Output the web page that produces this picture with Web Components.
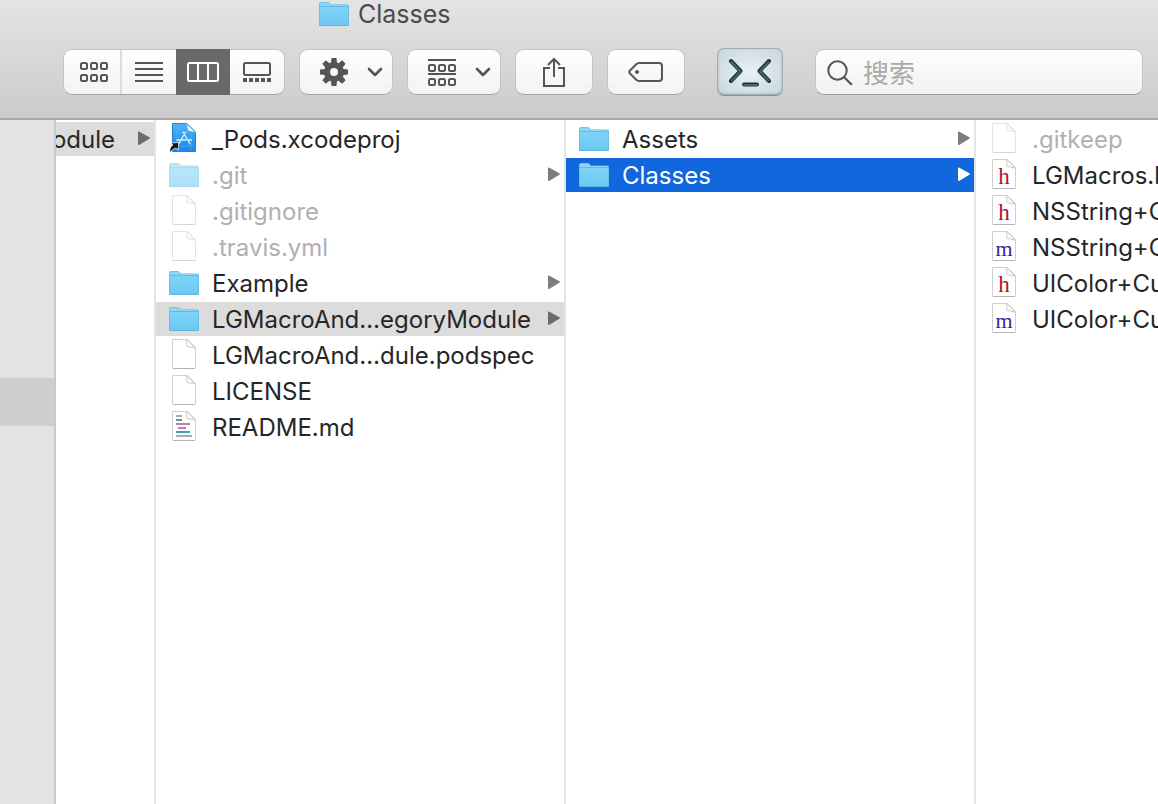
<!DOCTYPE html>
<html lang="zh-CN">
<head>
<meta charset="utf-8">
<meta name="viewport" content="width=device-width, initial-scale=1">
<title>Classes</title>
<style>
html, body { margin: 0; height: 100%; }
body { font-family: Inter, "Noto Sans CJK SC", sans-serif; font-size: 24px; line-height: 32px; color: #262626; background: #fff; overflow: hidden; }
</style>
</head>
<body>
<finder-window>
  <finder-toolbar slot="toolbar" heading="Classes"></finder-toolbar>
  <finder-sidebar slot="sidebar"></finder-sidebar>
  <finder-column class="clipped">
    <finder-row state="open" folder label="odule"></finder-row>
  </finder-column>
  <finder-column>
    <finder-row icon="xcode" label="_Pods.xcodeproj"></finder-row>
    <finder-row icon="folder" label=".git" folder dim></finder-row>
    <finder-row icon="doc" label=".gitignore" dim></finder-row>
    <finder-row icon="doc" label=".travis.yml" dim></finder-row>
    <finder-row icon="folder" label="Example" folder></finder-row>
    <finder-row icon="folder" label="LGMacroAnd…egoryModule" folder state="open"></finder-row>
    <finder-row icon="doc" label="LGMacroAnd…dule.podspec"></finder-row>
    <finder-row icon="doc" label="LICENSE"></finder-row>
    <finder-row icon="markdown" label="README.md"></finder-row>
  </finder-column>
  <finder-column>
    <finder-row icon="folder" label="Assets" folder></finder-row>
    <finder-row icon="folder" label="Classes" folder state="selected"></finder-row>
  </finder-column>
  <finder-column class="last">
    <finder-row icon="doc" label=".gitkeep" dim></finder-row>
    <finder-row icon="header" label="LGMacros.h"></finder-row>
    <finder-row icon="header" label="NSString+C"></finder-row>
    <finder-row icon="method" label="NSString+C"></finder-row>
    <finder-row icon="header" label="UIColor+Cu"></finder-row>
    <finder-row icon="method" label="UIColor+Cu"></finder-row>
  </finder-column>
</finder-window>

<script>
const sheet = '<path d="M4.500 1.500H19.500L27.500 9.500V29.500Q27.500 30.500 26.500 30.500H5.500Q4.500 30.500 4.500 29.500Z" fill="#fff" stroke="#cfcfcf"/><path d="M5 30.500H27" stroke="#b4b4b4"/><path d="M18.500 1.500L19 8.500L27 10L20 2.500Z" fill="#fbfbfb" stroke="#c6c6c6" stroke-width=".9"/>';
const letter = (ch, color) => `<text x="16" y="26" text-anchor="middle" font-family="Liberation Serif, serif" font-size="${ch === 'm' ? 22 : 23}" fill="${color}">${ch}</text>`;
const fileIcons = {
  folder: `<defs><linearGradient id="g" x2="0" y2="1"><stop stop-color="#7fd3f7"/><stop offset="1" stop-color="#6cc8f3"/></linearGradient></defs>
    <path d="M1 28V7Q1 5 3 5H9.500Q10.500 5 11.500 6L13 7.500H29Q31 7.500 31 9.500V28Q31 29 30 29H2Q1 29 1 28Z" fill="#5eb5e0"/>
    <path d="M1.500 9V7Q1.500 5.500 3 5.500H9.500Q10.500 5.500 11.500 6.500L13 8H29Q30.500 8 30.500 9Z" fill="#8bd5f5"/>
    <path d="M1.500 10H30.500V27Q30.500 28 29.500 28H2.500Q1.500 28 1.500 27Z" fill="url(#g)"/><path d="M2 9.500H30" stroke="#62bce8" stroke-width=".8"/>`,
  doc: sheet,
  markdown: sheet + '<g stroke-width="1.800"><path d="M8 6H14M8 26H24" stroke="#a9adb3"/><path d="M8 10H14M8 22H22" stroke="#45a0a0"/><path d="M8 14H22" stroke="#d06a94"/><path d="M10 18H18" stroke="#9a74e0"/></g>',
  header: sheet + letter('h', '#ab1436'),
  method: sheet + letter('m', '#3d2490'),
  xcode: `<defs><linearGradient id="x" x2="0" y2="1"><stop stop-color="#4bb4f2"/><stop offset="1" stop-color="#1b86e8"/></linearGradient></defs>
    <path d="M4.500 1.500H19L27.500 10V29.500H4.500Z" fill="url(#x)" stroke="#2385c9"/><path d="M18.500 1.500L19.500 9L27.500 10.500Z" fill="#e9f5fd" stroke="#59b1e8"/>
    <path d="M6 6H18M6 24H26M9 2V29M23 11V29" stroke="#60baf3" stroke-width=".5"/>
    <g fill="none" stroke="#d9f0ff" stroke-width="1.300" stroke-linecap="round"><path d="M15 10L22 22M17.500 10L11 21.500M9 18H18M20.500 18H23.500M9.500 22L10.500 21"/></g>
    <path d="M2 31Q1 25 5 23L3 21L10.500 20.500V28L8 26Q4 27 2 31Z" fill="#151515" stroke="#fff" stroke-width=".7"/>`
};
const svg = (w, h, body) => `<svg width="${w}" height="${h}" viewBox="0 0 ${w} ${h}" aria-hidden="true">${body}</svg>`;
const cells = (x, y) => [0, 10, 20].map(d => `<rect x="${x + d}" y="${y}" width="6" height="6" rx="1.500"/>`).join('');
const toolIcons = {
  grid: svg(30, 24, `<g fill="none" stroke="#555" stroke-width="2">${cells(2, 3)}${cells(2, 15)}</g>`),
  list: svg(28, 24, '<path d="M0 3H28M0 9H28M0 15H28M0 21H28" stroke="#555" stroke-width="2"/>'),
  columns: svg(32, 24, '<rect x="1" y="3" width="30" height="18" rx="1.500" fill="none" stroke="#fff" stroke-width="2"/><path d="M11 3V21M21 3V21" stroke="#fff" stroke-width="2"/>'),
  gallery: svg(28, 24, '<rect x="1" y="3" width="26" height="12" rx="1.500" fill="none" stroke="#555" stroke-width="2"/><path d="M0 20H4M6 20H10M12 20H16M18 20H22M24 20H28" stroke="#555" stroke-width="4"/>'),
  gear: svg(28, 28, `<g fill="#555">${[0, 45, 90, 135].map(a => `<path d="M11.500 0H16.500L17 5H11ZM11.500 28H16.500L17 23H11Z" transform="rotate(${a} 14 14)"/>`).join('')}</g><circle cx="14" cy="14" r="7" fill="none" stroke="#555" stroke-width="6"/>`),
  group: svg(28, 28, `<g fill="none" stroke="#555" stroke-width="2"><path d="M0 2H28M0 16H28"/>${cells(1, 7)}${cells(1, 21)}</g>`),
  chevron: svg(16, 16, '<path d="M2 5L8 11L14 5" fill="none" stroke="#555" stroke-width="2.600" stroke-linecap="round" stroke-linejoin="round"/>'),
  share: svg(24, 32, '<g fill="none" stroke="#555" stroke-width="2"><path d="M8 12H2V30H22V12H16M12 21V3M6 9L12 3L18 9"/></g>'),
  tag: svg(36, 24, '<path d="M11 3H31Q34 3 34 6V18Q34 21 31 21H11Q9.500 21 8 19.500L2 13.500Q.5 12 2 10.500L8 4.500Q9.500 3 11 3Z" fill="none" stroke="#555" stroke-width="2"/><circle cx="9" cy="12" r="2" fill="#555"/>'),
  terminal: svg(44, 30, '<g fill="none" stroke-linecap="round" stroke-linejoin="round"><path d="M3 4L12.500 14L3 24M41 4L31.500 14L41 24M16 27.500H29" stroke="#1c3339" stroke-width="4"/><path d="M3.500 5L12.500 14.500L4 23.500M40.500 5L32 14.500L40.500 23.500M16 28H29" stroke="#3b666b" stroke-width="2"/></g>'),
  search: svg(26, 26, '<circle cx="10.500" cy="11.500" r="9.200" fill="none" stroke="#555" stroke-width="2"/><path d="M17 18L25 26" stroke="#555" stroke-width="2.200"/>')
};

function define(name, css, html) {
  customElements.define(name, class extends HTMLElement {
    connectedCallback() {
      if (this.shadowRoot) return;
      this.attachShadow({ mode: 'open' }).innerHTML = `<style>*{box-sizing:border-box}svg{display:block;flex:none}${css}</style>${html(this)}`;
    }
  });
}

define('finder-window', `
  :host { display: flex; flex-direction: column; height: 100vh; overflow: hidden; }
  main { flex: 1; display: flex; min-height: 0; }
`, () => '<slot name="toolbar"></slot><main><slot name="sidebar"></slot><slot></slot></main>');

define('finder-sidebar', `
  :host { display: block; flex: none; width: 56px; box-sizing: border-box; padding-top: 258px; background: #e4e2e5; border-right: 2px solid #c9c8ca; }
  div { height: 48px; background: #d0ced1; }
`, () => '<div></div>');

define('finder-column', `
  :host { display: flex; flex-direction: column; gap: 2px; flex: none; width: 410px; box-sizing: border-box; padding-top: 2px; border-right: 2px solid #e4e4e4; overflow: hidden; background: #fff; }
  :host(.clipped) { width: 100px; }
  :host(.last) { flex: 1; width: auto; min-width: 0; border-right: 0; }
`, () => '<slot></slot>');

define('finder-row', `
  :host { display: block; }
  button { display: flex; align-items: center; gap: 12px; width: 100%; height: 34px; padding: 0 4px 0 12px; border: 0; background: none; font: inherit; color: inherit; text-align: left; }
  span { flex: 1; min-width: 0; padding-top: 2px; white-space: nowrap; }
  .bare { padding-left: 0; }
  .bare span { display: flex; justify-content: flex-end; padding-right: 11px; }
  :host([dim]) span { color: #b0b0b0; }
  :host([dim]) .file { opacity: .55; }
  :host([state=open]) button { background: #dcdcdc; }
  :host([state=selected]) button { background: #1067de; color: #fff; }
  .arrow { color: #7d7d7d; }
  :host([state=open]) .arrow { color: #6c6c6c; }
  :host([state=selected]) .arrow { color: #fff; }
`, el => {
  const icon = el.getAttribute('icon');
  return `<button type="button" class="${icon ? '' : 'bare'}">${icon ? `<svg class="file" width="32" height="34" viewBox="0 0 32 34" aria-hidden="true">${fileIcons[icon]}</svg>` : ''}<span>${el.getAttribute('label')}</span>${el.hasAttribute('folder') ? '<svg class="arrow" width="12" height="16" viewBox="0 0 12 16" aria-hidden="true"><path d="M0 1.500Q0 0 1.500 .8L11.300 6.300Q12.500 7 11.300 7.700L1.500 13.700Q0 14.500 0 13Z" fill="currentColor"/></svg>' : ''}</button>`;
});

define('tool-button', `
  :host { display: block; flex: none; width: 78px; height: 46px; }
  :host([menu]) { width: 94px; }
  :host([kind=terminal]) { width: 66px; height: 48px; margin: 0 18px; }
  button { display: flex; align-items: center; justify-content: center; width: 100%; height: 100%; padding: 0; border: 1px solid #c4c4c4; border-bottom-color: #a2a2a2; border-radius: 9px; background: linear-gradient(#fefefe, #f3f3f3); }
  :host([menu]) button { justify-content: space-between; padding: 0 9px 0 20px; }
  :host([kind=terminal]) button { border-color: #a3adb2; border-bottom-color: #89949a; border-radius: 7px; background: radial-gradient(#e9f2f6, #c7d5dc); box-shadow: inset 0 -1px 2px #8fa0a7; }
`, el => `<button type="button" aria-label="${el.getAttribute('kind')}">${toolIcons[el.getAttribute('kind')]}${el.hasAttribute('menu') ? toolIcons.chevron : ''}</button>`);

define('view-switch', `
  :host { display: grid; grid-template-columns: 58px 54px 54px 54px; flex: none; height: 46px; box-sizing: border-box; border: 1px solid #c4c4c4; border-bottom-color: #a2a2a2; border-radius: 9px; background: linear-gradient(#fefefe, #f3f3f3); }
  button { display: flex; align-items: center; justify-content: center; padding: 0; border: 0; background: none; }
  .divided { border-right: 2px solid #dcdcdc; padding-left: 4px; }
  .active { background: #696969; margin: -1px 0; }
`, () => `<button type="button" class="divided" aria-label="grid">${toolIcons.grid}</button><button type="button" aria-label="list">${toolIcons.list}</button><button type="button" class="active" aria-label="columns">${toolIcons.columns}</button><button type="button" aria-label="gallery">${toolIcons.gallery}</button>`);

define('search-field', `
  :host { display: block; flex: 1; min-width: 0; }
  label { display: flex; align-items: center; gap: 10px; height: 46px; padding: 0 11px; border: 1px solid #c4c4c4; border-bottom-color: #999; border-radius: 9px; background: linear-gradient(#fdfdfd, #f2f2f2); }
  input { flex: 1; min-width: 0; height: 40px; padding: 0 0 2px; border: 0; outline: 0; background: none; font-family: "Noto Sans CJK SC", sans-serif; font-size: 26px; color: #333; }
  input::placeholder { color: #aaa; opacity: 1; }
`, () => `<label>${toolIcons.search}<input type="text" placeholder="搜索" aria-label="搜索"></label>`);

define('finder-toolbar', `
  :host { display: flex; flex-direction: column; gap: 19px; flex: none; height: 120px; box-sizing: border-box; border-bottom: 2px solid #a9a9a9; background: linear-gradient(#e4e4e4, #cbcbcb); }
  header { display: flex; align-items: center; gap: 8px; height: 28px; padding-left: 318px; color: #4b4b4b; }
  header svg { margin: -4px 0; }
  h1 { margin: 0; font-size: 25px; font-weight: 400; line-height: 28px; }
  nav { display: flex; align-items: center; gap: 14px; height: 50px; padding: 0 15px 0 63px; }
`, el => `<header><svg width="32" height="34" viewBox="0 0 32 34" aria-hidden="true">${fileIcons.folder}</svg><h1>${el.getAttribute('heading')}</h1></header>
<nav><view-switch></view-switch><tool-button kind="gear" menu></tool-button><tool-button kind="group" menu></tool-button><tool-button kind="share"></tool-button><tool-button kind="tag"></tool-button><tool-button kind="terminal"></tool-button><search-field></search-field></nav>`);
</script>
</body>
</html>
